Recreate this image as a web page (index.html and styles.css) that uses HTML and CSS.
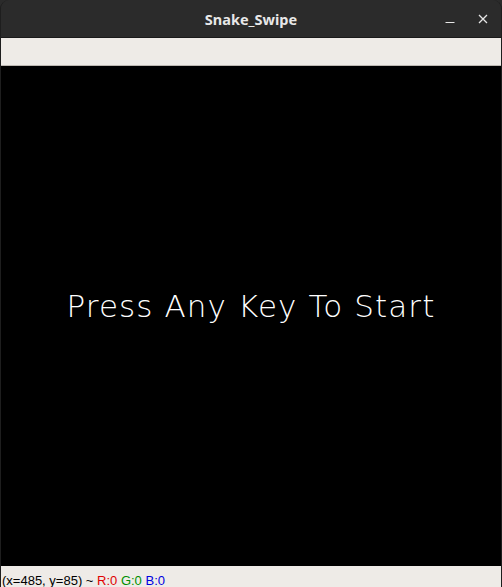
FILE: index.html
```html
<!DOCTYPE html>
<html>
<head>
<meta charset="utf-8">
<link rel="stylesheet" href="styles.css">
</head>
<body>
<div class="window">
  <header class="titlebar">
    <span class="title">Snake_Swipe</span>
    <div class="controls">
      <svg class="ctl" width="12" height="12" viewBox="0 0 12 12"><path d="M1.5 9.5h9" stroke="#e6e6e6" stroke-width="1.2"/></svg>
      <svg class="ctl" width="12" height="12" viewBox="0 0 12 12"><path d="M2 2l8 8M10 2l-8 8" stroke="#e6e6e6" stroke-width="1.3"/></svg>
    </div>
  </header>
  <div class="toolbar"></div>
  <main class="canvas">
    <p class="prompt">Press Any Key To Start</p>
  </main>
  <footer class="status">
    <span>(x=485, y=85) ~ </span><span class="r">R:0</span> <span class="g">G:0</span> <span class="b">B:0</span>
  </footer>
</div>
</body>
</html>
```
FILE: styles.css
```css
html, body {
  margin: 0;
  padding: 0;
  background: #2b2b2b;
  overflow: hidden;
}
.window {
  width: 502px;
  height: 587px;
  display: flex;
  flex-direction: column;
  background: #2b2b2b;
  border-radius: 9px 9px 0 0;
  overflow: hidden;
  box-sizing: border-box;
  border-left: 1px solid #1e1e1e;
  border-right: 1px solid #1e1e1e;
}
.titlebar {
  height: 37px;
  flex: none;
  background: #2b2b2b;
  display: flex;
  align-items: center;
  justify-content: center;
  position: relative;
  border-bottom: 1px solid #1a1a1a;
}
.title {
  font-family: "Noto Sans", "DejaVu Sans", sans-serif;
  font-weight: bold;
  font-size: 14.5px;
  color: #e8e8e8;
}
.controls {
  position: absolute;
  right: 12px;
  top: 13px;
  display: flex;
  gap: 21px;
}
.toolbar {
  height: 27px;
  flex: none;
  background: #eeebe7;
  border-bottom: 1px solid #bdb8b2;
}
.canvas {
  height: 500px;
  flex: none;
  background: #000;
  display: flex;
  align-items: center;
  justify-content: center;
  margin: 0;
}
.prompt {
  margin: 0;
  margin-top: -20px;
  font-family: "DejaVu Sans", sans-serif;
  font-weight: 200;
  font-size: 31px;
  letter-spacing: 1.1px;
  color: #fff;
}
.status {
  flex: 1;
  background: #eeebe7;
  font-family: "Liberation Sans", sans-serif;
  font-size: 13px;
  color: #000;
  padding: 7px 0 0 1px;
  white-space: nowrap;
  line-height: 16px;
}
.r { color: #e00000; }
.g { color: #009000; }
.b { color: #0000e0; }
```
